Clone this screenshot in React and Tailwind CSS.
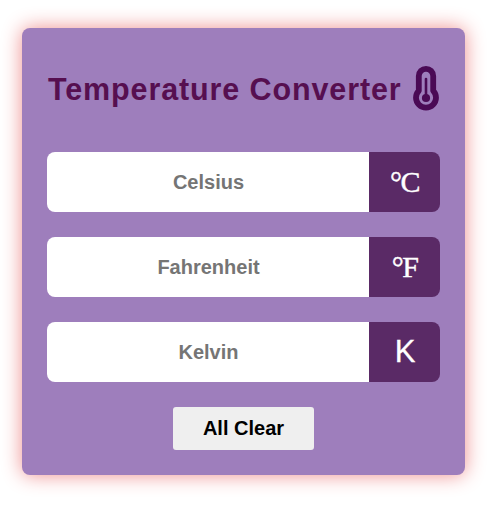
const UNITS = [
  { name: "Celsius", degree: true, letter: "C" },
  { name: "Fahrenheit", degree: true, letter: "F" },
  { name: "Kelvin", degree: false, letter: "K" },
];

function Thermometer() {
  return (
    <svg className="h-[46px] w-[26px] shrink-0" viewBox="0 0 26 46" fill="none">
      <path
        d="M5.8 11a7.2 7.2 0 0 1 14.4 0v14.7a10 10 0 1 1-14.4 0z"
        stroke="#4a0a55"
        strokeWidth="5.8"
        strokeLinejoin="round"
      />
      <path d="M13 14v18" stroke="#4a0a55" strokeWidth="2.6" strokeLinecap="round" />
      <circle cx="13" cy="33" r="4.1" fill="#4a0a55" />
    </svg>
  );
}

function UnitRow({ name, degree, letter }) {
  return (
    <div className="flex h-[60px] overflow-hidden rounded-[8px]">
      <input
        aria-label={name}
        placeholder={name}
        className="w-[322px] bg-white pl-px text-center text-[20px] font-bold text-black outline-none placeholder:text-[#757575]"
      />
      <div className="flex flex-1 items-center justify-center bg-[#5a2a66] text-white">
        {degree ? (
          <span className="font-['Liberation_Serif','Times_New_Roman',serif] text-[30px] leading-[60px] tracking-[-1.6px] [-webkit-text-stroke:0.4px_white]">
            °{letter}
          </span>
        ) : (
          <span className="pb-px pl-px text-[31px] leading-[58px] [-webkit-text-stroke:0.3px_white]">{letter}</span>
        )}
      </div>
    </div>
  );
}

export default function App() {
  return (
    <main className="h-[506px] w-[487px] overflow-hidden bg-white pt-[28px] pl-[22px] font-['Liberation_Sans',Arial,sans-serif]">
      <section className="flex h-[447px] w-[443px] flex-col rounded-[8px] bg-[#9e7ebc] px-[25px] pt-[37px] shadow-[0_0_20px_#ee8d8d]">
        <h1 className="flex h-[46px] items-center justify-between pr-px pl-px text-[30.5px] font-bold tracking-[0.88px] whitespace-nowrap text-[#560f50]">
          <span className="pt-[3px]">Temperature Converter</span>
          <Thermometer />
        </h1>
        <div className="mt-[41px] flex flex-col gap-[25px]">
          {UNITS.map((unit) => (
            <UnitRow key={unit.name} {...unit} />
          ))}
        </div>
        <button className="mt-[25px] h-[43px] w-[141px] self-center rounded-[3px] bg-[#efefef] pb-[2px] text-[20px] font-bold text-black">
          All Clear
        </button>
      </section>
    </main>
  );
}
